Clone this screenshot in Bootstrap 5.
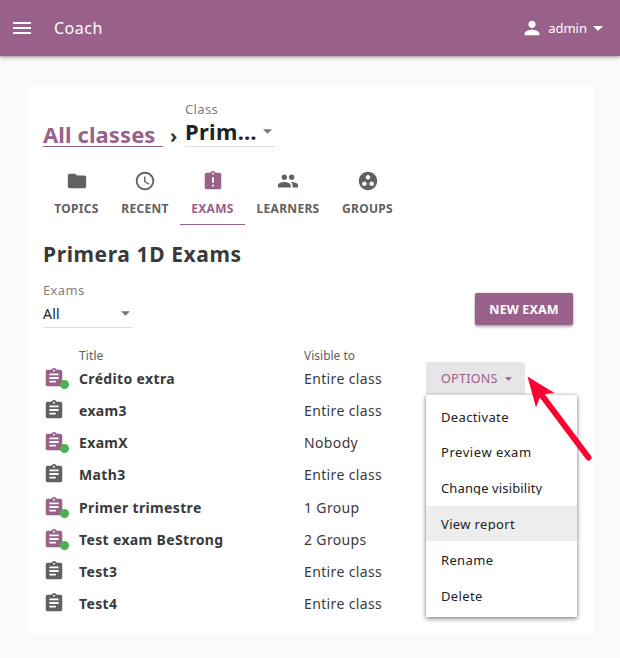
<!DOCTYPE html>
<html lang="en">
<head>
<meta charset="utf-8">
<meta name="viewport" content="width=device-width, initial-scale=1">
<title>Coach</title>
<link href="https://cdn.jsdelivr.net/npm/bootstrap@5.3.0/dist/css/bootstrap.min.css" rel="stylesheet">
<style>
:root { --plum: #996189; --ink: #3a3a3a; --grey: #616161; }
body { background: #f9f9f9; color: var(--ink); font-family: "Noto Sans", sans-serif; font-size: 14px; line-height: 20px; height: 658px; overflow: hidden; }
svg { fill: currentColor; display: block; flex: none; }
.appbar { height: 56px; background: var(--plum); box-shadow: 0 0 2px rgba(0,0,0,.15), 0 1px 4px rgba(0,0,0,.4); padding: 0 17px 0 10px; }
.app-title { font-size: 16px; margin-left: 20px; letter-spacing: .5px; }
.user-name { font-size: 13px; letter-spacing: 0; margin: 0 6px 1px 5px; }
.sheet { width: 565px; height: 549px; margin: 29px 0 0 29px; padding: 14px; }
.crumbs { height: 48px; }
.crumb-link { font-size: 22px; font-weight: 700; color: var(--plum); line-height: 16px; border-bottom: 1px solid var(--plum); letter-spacing: .1px; width: 120px; height: 21px; margin-top: 27px; }
.crumb-link:hover { color: var(--plum); }
.crumb-sep { font-size: 20px; font-weight: 700; width: 22px; padding-left: 7px; margin-top: 27px; color: #333; }
.class-select { width: 90px; height: 48px; border-bottom: 1px solid #ddd; }
.field-label { font-size: 13px; color: #808080; letter-spacing: .35px; }
.class-value { font-size: 22px; font-weight: 700; color: #222; line-height: 24px; letter-spacing: .3px; padding-right: 3px; }
.tabs-row { margin-top: 14px; height: 64px; }
.tab-item { height: 64px; padding-top: 9px; color: var(--grey); font-size: 12px; font-weight: 700; border-bottom: 1px solid transparent; letter-spacing: .3px; }
.tab-item span { margin-top: 7px; white-space: nowrap; }
.tab-item.current { color: var(--plum); border-color: var(--plum); }
.tab-a { width: 67px; } .tab-b { width: 70px; } .tab-c { width: 65px; } .tab-d { width: 86px; } .tab-e { width: 73px; }
.page-title { font-size: 21px; font-weight: 700; line-height: 30px; margin: 14px 0 0; letter-spacing: .6px; }
.filter-row { margin-top: 11px; height: 48px; }
.exam-filter { width: 90px; height: 48px; border-bottom: 1px solid #ddd; }
.filter-value { font-size: 14px; color: #222; height: 27px; padding-right: 3px; letter-spacing: .2px; }
.new-exam { background: var(--plum); color: #fff; font-size: 12.5px; font-weight: 700; line-height: 34px; width: 98px; height: 32px; padding: 0; border: 0; border-radius: 2px; margin: 13px 7px 0 0; letter-spacing: .12px; box-shadow: 0 0 2px rgba(0,0,0,.2), 0 2px 3px rgba(0,0,0,.3); }
.exam-list { margin-top: 18px; }
.head-line { font-size: 12px; height: 17px; line-height: 20px; color: var(--grey); }
.exam-line { height: 32.15px; }
.icon-cell { width: 36px; color: var(--grey); padding-bottom: 2px; }
.icon-cell.active-exam { color: var(--plum); }
.title-cell { width: 225px; letter-spacing: .35px; }
.head-line .title-cell { letter-spacing: .1px; }
.visible-cell { letter-spacing: .36px; }
.status-dot { position: absolute; width: 9px; height: 9px; left: 17px; top: 13px; border-radius: 50%; background: #4caf50; }
.options-wrap { position: absolute; left: 426px; top: 362px; width: 151px; }
.options-btn { width: 99px; height: 32px; background: #e6e6e6; color: var(--plum); font-size: 12.5px; border-radius: 2px 2px 0 0; padding: 1px 0 0 15px; letter-spacing: .3px; }
.options-btn svg { margin-left: 7px; }
.options-menu { position: static; width: 151px; height: 222px; min-width: 0; margin-top: 1px; padding: 3.6px 0 0; border: 0; border-radius: 0; box-shadow: 0 0 3px rgba(0,0,0,.25), 0 2px 5px rgba(0,0,0,.4); }
.options-menu .dropdown-item { height: 35.8px; line-height: 36px; padding: 0 15px; font-size: 13px; color: #222; letter-spacing: .35px; }
.options-menu .dropdown-item span { display: block; height: 25px; overflow: hidden; }
.options-menu .dropdown-item.hovered { background: #ededed; height: 35px; margin-bottom: .8px; }
.options-menu .loose { letter-spacing: .55px; }
.options-menu .tight { letter-spacing: .12px; }
.pointer { position: absolute; left: 520px; top: 370px; }
</style>
</head>
<body>
<header class="appbar d-flex align-items-center text-white">
  <svg width="24" height="24" viewBox="0 0 24 24"><path d="M3 18h18v-2H3v2zm0-5h18v-2H3v2zm0-7v2h18V6H3z"/></svg>
  <span class="app-title">Coach</span>
  <div class="ms-auto d-flex align-items-center">
    <svg width="22" height="22" viewBox="0 0 24 24"><path d="M12 12c2.21 0 4-1.79 4-4s-1.79-4-4-4-4 1.79-4 4 1.79 4 4 4zm0 2c-2.67 0-8 1.34-8 4v2h16v-2c0-2.66-5.33-4-8-4z"/></svg>
    <span class="user-name">admin</span>
    <svg width="10" height="5" viewBox="0 0 10 5"><path d="M0 0h10L5 5z"/></svg>
  </div>
</header>

<main class="sheet bg-white">
  <div class="crumbs d-flex">
    <a href="#" class="crumb-link text-decoration-none">All classes</a>
    <span class="crumb-sep">›</span>
    <div class="class-select">
      <div class="field-label">Class</div>
      <div class="class-value d-flex align-items-center justify-content-between"><span>Prim…</span><svg width="9" height="5" viewBox="0 0 10 5" color="#757575"><path d="M0 0h10L5 5z"/></svg></div>
    </div>
  </div>

  <nav class="tabs-row d-flex">
    <div class="tab-item tab-a d-flex flex-column align-items-center"><svg width="22" height="22" viewBox="0 0 24 24"><path d="M10 4H4c-1.1 0-1.99.9-1.99 2L2 18c0 1.1.9 2 2 2h16c1.1 0 2-.9 2-2V8c0-1.1-.9-2-2-2h-8l-2-2z"/></svg><span>TOPICS</span></div>
    <div class="tab-item tab-b d-flex flex-column align-items-center"><svg width="22" height="22" viewBox="0 0 24 24"><path d="M11.99 2C6.47 2 2 6.48 2 12s4.47 10 9.99 10C17.52 22 22 17.52 22 12S17.52 2 11.99 2zM12 20c-4.42 0-8-3.58-8-8s3.58-8 8-8 8 3.58 8 8-3.58 8-8 8z"/><path d="M12.5 7H11v6l5.25 3.15.75-1.23-4.5-2.67z"/></svg><span>RECENT</span></div>
    <div class="tab-item tab-c current d-flex flex-column align-items-center"><svg width="22" height="22" viewBox="0 0 24 24"><path d="M19 3h-4.18C14.4 1.84 13.3 1 12 1c-1.3 0-2.4.84-2.82 2H5c-1.1 0-2 .9-2 2v14c0 1.1.9 2 2 2h14c1.1 0 2-.9 2-2V5c0-1.1-.9-2-2-2zm-6 15h-2v-2h2v2zm0-4h-2V8h2v6zm-1-9c-.55 0-1-.45-1-1s.45-1 1-1 1 .45 1 1-.45 1-1 1z"/></svg><span>EXAMS</span></div>
    <div class="tab-item tab-d d-flex flex-column align-items-center"><svg width="22" height="22" viewBox="0 0 24 24"><path d="M16 11c1.66 0 2.99-1.34 2.99-3S17.66 5 16 5c-1.66 0-3 1.34-3 3s1.34 3 3 3zm-8 0c1.66 0 2.99-1.34 2.99-3S9.66 5 8 5C6.34 5 5 6.34 5 8s1.34 3 3 3zm0 2c-2.33 0-7 1.17-7 3.5V19h14v-2.5c0-2.33-4.67-3.5-7-3.5zm8 0c-.29 0-.62.02-.97.05 1.16.84 1.97 1.97 1.97 3.45V19h6v-2.5c0-2.33-4.67-3.5-7-3.5z"/></svg><span>LEARNERS</span></div>
    <div class="tab-item tab-e d-flex flex-column align-items-center"><svg width="22" height="22" viewBox="0 0 24 24"><path d="M12 2C6.48 2 2 6.48 2 12s4.48 10 10 10 10-4.48 10-10S17.52 2 12 2zM8 17.5c-1.38 0-2.5-1.12-2.5-2.5s1.12-2.5 2.5-2.5 2.5 1.12 2.5 2.5-1.12 2.5-2.5 2.5zM9.5 8c0-1.38 1.12-2.5 2.5-2.5s2.5 1.12 2.5 2.5-1.12 2.5-2.5 2.5S9.5 9.38 9.5 8zm6.5 9.5c-1.38 0-2.5-1.12-2.5-2.5s1.12-2.5 2.5-2.5 2.5 1.12 2.5 2.5-1.12 2.5-2.5 2.5z"/></svg><span>GROUPS</span></div>
  </nav>

  <h1 class="page-title">Primera 1D Exams</h1>

  <div class="filter-row d-flex justify-content-between">
    <div class="exam-filter">
      <div class="field-label">Exams</div>
      <div class="filter-value d-flex align-items-center justify-content-between"><span>All</span><svg width="9" height="5" viewBox="0 0 10 5" color="#757575"><path d="M0 0h10L5 5z"/></svg></div>
    </div>
    <button class="btn new-exam">NEW EXAM</button>
  </div>

  <svg class="d-none"><symbol id="sheet-icon" viewBox="0 0 24 24"><path d="M19 3h-4.18C14.4 1.84 13.3 1 12 1c-1.3 0-2.4.84-2.82 2H5c-1.1 0-2 .9-2 2v14c0 1.1.9 2 2 2h14c1.1 0 2-.9 2-2V5c0-1.1-.9-2-2-2zm-7 0c.55 0 1 .45 1 1s-.45 1-1 1-1-.45-1-1 .45-1 1-1zm2 14H7v-2h7v2zm3-4H7v-2h10v2zm0-4H7V7h10v2z"/></symbol></svg>

  <div class="exam-list">
    <div class="head-line d-flex"><div class="icon-cell"></div><div class="title-cell">Title</div><div>Visible to</div></div>
    <div class="exam-line d-flex align-items-center"><div class="icon-cell position-relative active-exam"><svg width="22" height="22"><use href="#sheet-icon"/></svg><i class="status-dot"></i></div><div class="title-cell fw-bold">Crédito extra</div><div class="visible-cell">Entire class</div></div>
    <div class="exam-line d-flex align-items-center"><div class="icon-cell"><svg width="22" height="22"><use href="#sheet-icon"/></svg></div><div class="title-cell fw-bold">exam3</div><div class="visible-cell">Entire class</div></div>
    <div class="exam-line d-flex align-items-center"><div class="icon-cell position-relative active-exam"><svg width="22" height="22"><use href="#sheet-icon"/></svg><i class="status-dot"></i></div><div class="title-cell fw-bold">ExamX</div><div class="visible-cell">Nobody</div></div>
    <div class="exam-line d-flex align-items-center"><div class="icon-cell"><svg width="22" height="22"><use href="#sheet-icon"/></svg></div><div class="title-cell fw-bold">Math3</div><div class="visible-cell">Entire class</div></div>
    <div class="exam-line d-flex align-items-center"><div class="icon-cell position-relative active-exam"><svg width="22" height="22"><use href="#sheet-icon"/></svg><i class="status-dot"></i></div><div class="title-cell fw-bold">Primer trimestre</div><div class="visible-cell">1 Group</div></div>
    <div class="exam-line d-flex align-items-center"><div class="icon-cell position-relative active-exam"><svg width="22" height="22"><use href="#sheet-icon"/></svg><i class="status-dot"></i></div><div class="title-cell fw-bold">Test exam BeStrong</div><div class="visible-cell">2 Groups</div></div>
    <div class="exam-line d-flex align-items-center"><div class="icon-cell"><svg width="22" height="22"><use href="#sheet-icon"/></svg></div><div class="title-cell fw-bold">Test3</div><div class="visible-cell">Entire class</div></div>
    <div class="exam-line d-flex align-items-center"><div class="icon-cell"><svg width="22" height="22"><use href="#sheet-icon"/></svg></div><div class="title-cell fw-bold">Test4</div><div class="visible-cell">Entire class</div></div>
  </div>
</main>

<div class="options-wrap">
  <div class="options-btn d-flex align-items-center"><span>OPTIONS</span><svg width="7" height="4" viewBox="0 0 10 5"><path d="M0 0h10L5 5z"/></svg></div>
  <div class="options-menu dropdown-menu d-block">
    <a class="dropdown-item"><span>Deactivate</span></a>
    <a class="dropdown-item loose"><span>Preview exam</span></a>
    <a class="dropdown-item tight"><span>Change visibility</span></a>
    <a class="dropdown-item hovered"><span>View report</span></a>
    <a class="dropdown-item"><span>Rename</span></a>
    <a class="dropdown-item"><span>Delete</span></a>
  </div>
</div>

<svg class="pointer" width="80" height="100" viewBox="520 370 80 100"><path d="M588.5 457.5L542 395.500" stroke="#ff0033" stroke-width="6" stroke-linecap="round"/><path d="M527.500 376.500L554.500 393L541 394.500L536 407.500z" fill="#ff0033"/></svg>
<script src="https://cdn.jsdelivr.net/npm/bootstrap@5.3.0/dist/js/bootstrap.bundle.min.js"></script>
</body>
</html>
